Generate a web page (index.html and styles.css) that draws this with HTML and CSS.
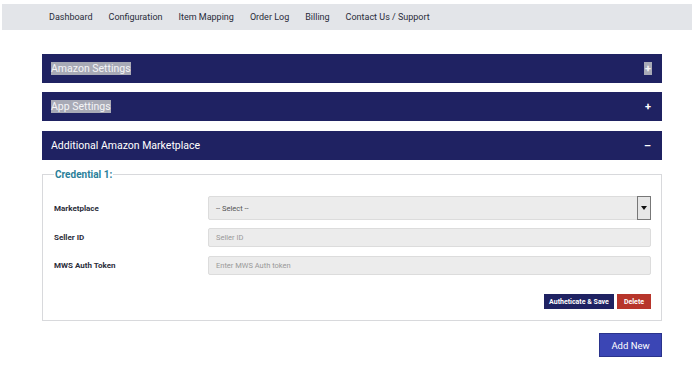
FILE: index.html
```html
<!DOCTYPE html>
<html>
<head>
<meta charset="utf-8">
<link rel="stylesheet" href="styles.css">
</head>
<body>
<nav class="topnav">
  <a>Dashboard</a>
  <a>Configuration</a>
  <a>Item Mapping</a>
  <a>Order Log</a>
  <a>Billing</a>
  <a>Contact Us / Support</a>
</nav>
<main class="content">
  <div class="panel"><span class="hl">Amazon Settings</span><span class="toggle hl">+</span></div>
  <div class="panel"><span class="hl">App Settings</span><span class="toggle">+</span></div>
  <div class="panel"><span>Additional Amazon Marketplace</span><span class="toggle">–</span></div>
  <fieldset class="cred">
    <legend>Credential 1:</legend>
    <div class="row row-select">
      <label>Marketplace</label>
      <div class="select"><span>-- Select --</span><span class="arrow"></span></div>
    </div>
    <div class="row">
      <label>Seller ID</label>
      <div class="input">Seller ID</div>
    </div>
    <div class="row">
      <label>MWS Auth Token</label>
      <div class="input">Enter MWS Auth token</div>
    </div>
    <div class="actions">
      <button class="btn btn-save">Autheticate &amp; Save</button>
      <button class="btn btn-del">Delete</button>
    </div>
  </fieldset>
  <div class="addrow"><button class="btn-add">Add New</button></div>
</main>
</body>
</html>
```
FILE: styles.css
```css
* { box-sizing: border-box; }
body {
  margin: 0;
  background: #fff;
  font-family: "Roboto", "Liberation Sans", sans-serif;
  color: #222;
}
.topnav {
  margin: 4px 0 0 2px;
  height: 26px;
  background: #e3e5e9;
  display: flex;
  align-items: center;
  padding-left: 47px;
  gap: 16px;
  font-size: 9px;
  color: #2a2c3a;
}
.content {
  margin: 24px 30px 0 42px;
}
.panel {
  height: 29px;
  background: #1f2262;
  color: #fff;
  display: flex;
  align-items: center;
  justify-content: space-between;
  padding: 0 10px 0 9px;
  font-size: 10.5px;
  margin-bottom: 9px;
}
.panel:nth-child(2) { margin-bottom: 10px; }
.hl { background: #a8aab6; color: #f4f4f6; }
.toggle { font-weight: bold; font-size: 11px; padding: 0 1px; }
.cred {
  margin: 8px 0 0;
  border: 1px solid #d8d9dc;
  padding: 10px 10px 11px 11px;
  min-width: 0;
}
.cred legend {
  color: #2a7f9a;
  font-size: 10px;
  font-weight: bold;
  padding: 0 1px;
  margin-left: 0;
}
.row {
  display: flex;
  align-items: center;
  height: 19px;
  margin-bottom: 9px;
}
.row-select { height: 24px; margin-top: 6px; margin-bottom: 8px; }
.row label {
  width: 154px;
  font-size: 8px;
  font-weight: bold;
  color: #2b2d3a;
}
.select, .input {
  flex: 1;
  height: 100%;
  background: #ececec;
  border: 1px solid #dcdcdc;
  border-radius: 2px;
  font-size: 7.5px;
  color: #999;
  display: flex;
  align-items: center;
  padding-left: 7px;
}
.select { color: #555; justify-content: space-between; padding-right: 0; }
.arrow {
  width: 14px;
  height: 24px;
  margin: -1px -1px -1px 0;
  border: 1px solid #777;
  background: #e6e6e6;
  position: relative;
}
.arrow::after {
  content: "";
  position: absolute;
  left: 3px;
  top: 9px;
  border-left: 3px solid transparent;
  border-right: 3px solid transparent;
  border-top: 4px solid #111;
}
.actions {
  display: flex;
  justify-content: flex-end;
  gap: 3px;
  margin-top: 19px;
}
.btn {
  border: none;
  color: #fff;
  font-family: inherit;
  font-size: 7px;
  font-weight: bold;
  height: 15px;
  padding: 0 7px;
}
.btn-save { background: #1f2262; width: 70px; padding: 0; }
.btn-del { background: #b7352b; width: 34px; padding: 0; }
.addrow {
  display: flex;
  justify-content: flex-end;
  margin-top: 12px;
}
.btn-add {
  width: 63px;
  height: 24px;
  border: 1px solid #2a338c;
  background: #3b46b5;
  color: #fff;
  font-family: inherit;
  font-size: 9.5px;
}
```
